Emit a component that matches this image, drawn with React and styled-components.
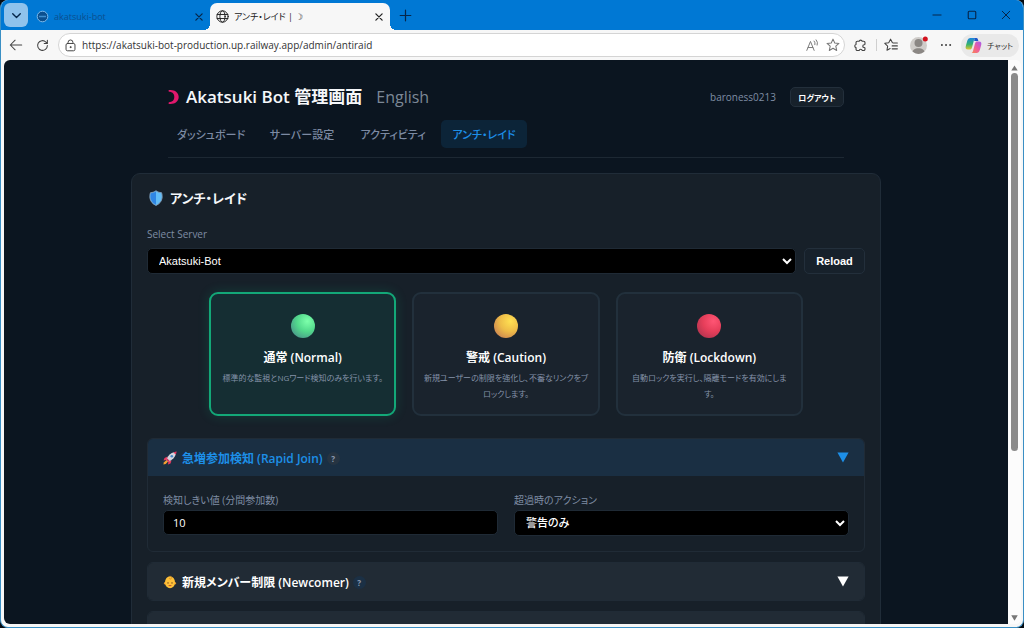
import React, { useState } from "react";
import styled, { createGlobalStyle, css } from "styled-components";

const Global = createGlobalStyle`
  *, *::before, *::after { box-sizing: border-box; }
  html, body { margin: 0; background: #050a10; }
  body, button, input, select {
    font-family: "Open Sans", "Noto Sans CJK JP", sans-serif;
    font-feature-settings: "palt";
  }
  button { padding: 0; border: 0; background: none; color: inherit; cursor: pointer; }
`;

/* ---------- browser window ---------- */

const Window = styled.div`
  height: 100vh;
  display: flex;
  flex-direction: column;
  overflow: hidden;
  background: #f7f7f7;
  border: solid #3a8fc4;
  border-width: 0 1px 1px;
  border-radius: 8px;
`;

const TitleBar = styled.div`
  display: flex;
  align-items: flex-end;
  height: 30px;
  flex: none;
  padding-left: 3px;
  background: #0078d4;
  color: #06264a;
`;

const TabMenuButton = styled.button`
  display: grid;
  place-items: center;
  width: 24px;
  height: 24px;
  margin: 0 6px 3px 0;
  border-radius: 6px;
  background: #8fc2ec;
`;

const Tab = styled.div`
  position: relative;
  display: flex;
  align-items: center;
  gap: 5px;
  height: 27px;
  width: 176px;
  padding: 0 5px 0 2px;
  font-size: 9px;
  color: #0b4f8f;
  ${(p) =>
    p.$active &&
    css`
      width: 180px;
      padding-left: 6px;
      background: #f7f7f7;
      color: #222;
      border-radius: 7px 7px 0 0;
      &::before, &::after {
        content: "";
        position: absolute;
        bottom: 0;
        width: 6px;
        height: 6px;
      }
      &::before { left: -6px; background: radial-gradient(circle at 0 0, transparent 6px, #f7f7f7 6px); }
      &::after { right: -6px; background: radial-gradient(circle at 100% 0, transparent 6px, #f7f7f7 6px); }
    `}
`;

const TabLabel = styled.span`
  flex: 1;
  white-space: nowrap;
`;

const IconButton = styled.button`
  display: grid;
  place-items: center;
  flex: none;
  width: ${(p) => p.$w || 27}px;
  height: ${(p) => p.$h || 24}px;
  color: ${(p) => p.$color || "inherit"};
`;

const WindowControls = styled.div`
  display: flex;
  margin-left: auto;
`;

const Toolbar = styled.div`
  display: flex;
  align-items: center;
  height: 30px;
  flex: none;
  padding: 0 4px 0 1px;
  color: #444;
`;

const AddressBar = styled.label`
  display: flex;
  align-items: center;
  flex: 1;
  height: 24px;
  margin-left: 2px;
  padding-left: 5px;
  border: 1px solid #d4d4d4;
  border-radius: 12px;
  background: #fff;
`;

const AddressInput = styled.input`
  flex: 1;
  min-width: 0;
  padding: 0 0 0 5px;
  border: 0;
  outline: 0;
  background: none;
  font-size: 10px;
  color: #333;
`;

const Separator = styled.span`
  width: 1px;
  height: 12px;
  background: #cfcfcf;
`;

const ChatButton = styled.button`
  display: flex;
  align-items: center;
  gap: 5px;
  width: 58px;
  height: 23px;
  margin-left: 2px;
  padding-left: 4px;
  border-radius: 12px;
  background: #e9e9e9;
  font-size: 8px;
  white-space: nowrap;
  color: #333;
`;

const Viewport = styled.div`
  flex: 1;
  min-height: 0;
  display: flex;
  margin: 0 2px 3px 3px;
  border-radius: 6px;
  overflow: hidden;
  background: #fcfcfc;
`;

const Page = styled.main`
  flex: 1;
  min-width: 0;
  overflow: hidden;
  background: #0b1520;
  color: #f5f7fa;
`;

const ScrollTrack = styled.div`
  display: flex;
  flex-direction: column;
  align-items: center;
  width: 13px;
  padding: 5px 0 3px;
  background: #fcfcfc;
`;

const ScrollThumb = styled.div`
  width: 7px;
  height: 68%;
  margin: 2px 0 auto;
  border-radius: 4px;
  background: #8a8a8a;
`;

/* ---------- admin page ---------- */

const Header = styled.header`
  max-width: 676px;
  margin: 0 auto;
  padding: 24px 0 9px;
  border-bottom: 1px solid #1d2833;
`;

const HeaderRow = styled.div`
  display: flex;
  align-items: center;
  height: 26px;
`;

const Brand = styled.h1`
  display: flex;
  align-items: center;
  gap: 7px;
  margin: 0;
  font-size: 17px;
  line-height: 26px;
  font-weight: 600;
  white-space: nowrap;
`;

const LanguageLink = styled.a`
  margin-left: 14px;
  font-size: 16px;
  line-height: 26px;
  color: #7c8896;
  text-decoration: none;
`;

const UserName = styled.span`
  margin-left: auto;
  font-size: 10px;
  color: #7f8da4;
`;

const PanelButton = styled.button`
  height: ${(p) => p.$h}px;
  width: ${(p) => p.$w}px;
  flex: none;
  border: 1px solid #232f3b;
  border-radius: 5px;
  background: #17212b;
  color: #fff;
  font-weight: 700;
  white-space: nowrap;
  font-size: ${(p) => p.$size}px;
`;

const Logout = styled(PanelButton)`
  margin-left: 14px;
`;

const Reload = styled(PanelButton)`
  font-family: "Liberation Sans", sans-serif;
`;

const Nav = styled.nav`
  display: flex;
  gap: 5px;
  margin-top: 10px;
`;

const NavLink = styled.a`
  min-width: 86px;
  height: 28px;
  border-radius: 5px;
  font-size: 11px;
  line-height: 29px;
  font-weight: 500;
  text-align: center;
  white-space: nowrap;
  text-decoration: none;
  color: ${(p) => (p.$active ? "#1d8fe8" : "#7c8aa3")};
  background: ${(p) => (p.$active ? "#0c2438" : "transparent")};
`;

const Card = styled.section`
  max-width: 750px;
  margin: 15px auto 0;
  padding: 12px 15px;
  border: 1px solid #202c38;
  border-radius: 9px;
  background: #172029;
`;

const CardTitle = styled.h2`
  display: flex;
  align-items: center;
  gap: 7px;
  margin: 0;
  padding-left: 2px;
  font-size: 13px;
  line-height: 24px;
  font-weight: 700;
`;

const FieldLabel = styled.label`
  display: block;
  font-size: 10px;
  line-height: 20px;
  color: #7f8da4;
  white-space: nowrap;
`;

const ServerField = styled.div`
  padding-top: 14px;
`;

const ServerRow = styled.div`
  display: flex;
  align-items: center;
  gap: 8px;
  margin-top: 4px;
`;

const control = css`
  width: 100%;
  border: 1px solid #1f2a35;
  border-radius: 5px;
  background: #000;
  color: #fff;
  font-weight: 500;
`;

const Select = styled.select`
  ${control}
  height: 26px;
  padding: 0 0 0 7px;
  font-family: "Liberation Sans", "Noto Sans CJK JP", sans-serif;
  font-size: 11px;
`;

const NumberInput = styled.input`
  ${control}
  height: 25px;
  padding: 0 9px;
  font-size: 11px;
`;

const Modes = styled.div`
  display: grid;
  grid-template-columns: repeat(3, 1fr);
  gap: 16px;
  max-width: 594px;
  margin: 18px auto 22px;
`;

const Mode = styled.button`
  display: flex;
  flex-direction: column;
  align-items: center;
  min-height: 124px;
  padding: 20px 8px 12px;
  border: 2px solid ${(p) => (p.$active ? "#13a878" : "#22303c")};
  border-radius: 9px;
  background: ${(p) => (p.$active ? "#152e33" : "#1a232d")};
  box-shadow: ${(p) => (p.$active ? "0 0 12px #10b98133" : "none")};
`;

const ModeName = styled.span`
  margin-top: 10px;
  font-size: 12px;
  line-height: 20px;
  font-weight: 600;
  color: #fff;
`;

const ModeText = styled.span`
  margin-top: 2px;
  font-size: 8px;
  line-height: 16px;
  color: #8492a8;
  white-space: pre-line;
`;

const Accordion = styled.section`
  margin-bottom: 10px;
  border: 1px solid #202b36;
  border-radius: 6px;
  overflow: hidden;
`;

const AccordionHead = styled.button`
  display: flex;
  align-items: center;
  width: 100%;
  height: 37px;
  padding: 0 15px;
  font-size: 12px;
  font-weight: 600;
  color: ${(p) => (p.$open ? "#1d8fe8" : "#fff")};
  background: ${(p) => (p.$open ? "#1a2f43" : "#212b35")};
`;

const AccordionName = styled.span`
  margin-left: 5px;
`;

const Help = styled.span`
  display: grid;
  place-items: center;
  width: 13px;
  height: 13px;
  margin: 2px 0 0 4px;
  border-radius: 50%;
  background: ${(p) => (p.$open ? "#263442" : "#1b3045")};
  font-size: 8px;
  font-weight: 700;
  color: #8e9db2;
`;

const Chevron = styled.span`
  display: flex;
  margin-left: auto;
`;

const AccordionBody = styled.div`
  display: grid;
  grid-template-columns: 1fr 1fr;
  gap: 16px;
  padding: 14px 15px 15px;
`;

const Field = styled.div`
  min-width: 0;
`;

/* ---------- drawings ---------- */

const Svg = ({ w = 14, h = w, box = "0 0 16 16", sw = 1.2, children }) => (
  <svg width={w} height={h} viewBox={box} fill="none" stroke="currentColor" strokeWidth={sw} strokeLinecap="round" strokeLinejoin="round" aria-hidden="true">
    {children}
  </svg>
);

const CloseIcon = ({ w = 10 }) => <Svg w={w} sw={2}><path d="M3 3l10 10M13 3L3 13" /></Svg>;

const Moon = () => (
  <svg width="11" height="16" viewBox="0 0 11 16" aria-hidden="true">
    <path d="M.5 1.2C6 .2 10.700 3.200 10.700 8S6 15.800.5 14.800L.8 13.200C4.500 13.200 6.300 11 6.300 8S4.500 2.800.8 2.800Z" fill="#e0186c" />
  </svg>
);

const Shield = () => (
  <svg width="14" height="16" viewBox="0 0 14 16" aria-hidden="true">
    <path d="M7 .8C5.200 2.100 3.400 2.600 1.500 2.700C.8 4.500.8 6.500 1 8.200c.4 3.300 2.800 5.900 6 7.200 3.200-1.300 5.600-3.900 6-7.200.2-1.700.2-3.700-.5-5.500C10.600 2.600 8.800 2.100 7 .8Z" fill="#62bdf7" stroke="#7f9cb8" strokeWidth="1" />
    <path d="M7 1.600C5.400 2.700 3.800 3.100 2 3.200C1.400 5 1.400 6.500 1.600 8.100 2 11 4.200 13.400 7 14.700Z" fill="#2f86e4" />
  </svg>
);

const Ball = ({ id, light, mid, dark }) => (
  <svg width="24" height="24" viewBox="0 0 24 24" aria-hidden="true">
    <defs>
      <radialGradient id={id} cx=".68" cy=".3" r=".78">
        <stop offset="0" stopColor={light} />
        <stop offset=".55" stopColor={mid} />
        <stop offset="1" stopColor={dark} />
      </radialGradient>
    </defs>
    <circle cx="12" cy="12" r="12" fill={`url(#${id})`} />
  </svg>
);

const Rocket = () => (
  <svg width="14" height="14" viewBox="0 0 14 14" aria-hidden="true">
    <path d="M4.500 5.500L1.500 7 .5 9.500 4 8.800ZM8.500 9.500L7.500 12.500 5 13.500 5.500 10Z" fill="#e8375f" />
    <path d="M3.500 9L.8 11.500.4 13.600 2.700 13.100 5 10.600Z" fill="#f5a030" />
    <path d="M3.200 8.700C5 4.500 8 1.800 11 1.300L12.800 3.100C12.200 6.200 9.400 9.200 5.300 10.900Z" fill="#d6d3dd" />
    <path d="M10.500 1.400C12 .7 13.300.5 13.600.5 13.600 1 13.400 2.200 12.700 3.600Z" fill="#e8375f" />
    <circle cx="8.800" cy="5.200" r="1.300" fill="#4687c7" />
    <path d="M3.200 8.700L5.300 10.900 6.800 10 4 7.200Z" fill="#d4315d" />
  </svg>
);

const Baby = () => (
  <svg width="14" height="14" viewBox="0 0 14 14" aria-hidden="true">
    <circle cx="2.300" cy="8.200" r="1.300" fill="#e89a2b" />
    <circle cx="11.700" cy="8.200" r="1.300" fill="#e89a2b" />
    <ellipse cx="7" cy="7.200" rx="5" ry="6" fill="#fdbf38" />
    <path d="M6.600 1.300C9 1 9.200 3.400 7.500 4 6.400 4.200 6.100 3.300 6.800 2.900" fill="none" stroke="#c98424" strokeWidth=".7" />
    <circle cx="5" cy="7.900" r=".7" fill="#5a3420" />
    <circle cx="9" cy="7.900" r=".7" fill="#5a3420" />
    <path d="M5.200 10.200C6.200 11.500 7.800 11.500 8.800 10.200Z" fill="#b23a2c" />
  </svg>
);

const Triangle = ({ w = 12, h = 11, fill = "currentColor", up }) => (
  <svg width={w} height={h} viewBox="0 0 12 11" preserveAspectRatio="none" aria-hidden="true">
    <path d={up ? "M6 1L11.500 10H.5Z" : "M.4.6H11.600L6 10.400Z"} fill={fill} />
  </svg>
);

const Copilot = () => (
  <svg width="17" height="17" viewBox="0 0 17 17" aria-hidden="true">
    <defs>
      <linearGradient id="cpA" x1="0" y1="0" x2="0" y2="1">
        <stop offset="0" stopColor="#1b83e0" /><stop offset=".55" stopColor="#35b36b" /><stop offset="1" stopColor="#e6c52f" />
      </linearGradient>
      <linearGradient id="cpB" x1="1" y1="0" x2="0" y2="1">
        <stop offset="0" stopColor="#a35cf0" /><stop offset=".5" stopColor="#ee5c9d" /><stop offset="1" stopColor="#f98a4c" />
      </linearGradient>
    </defs>
    <path d="M5.500 1H11C10 1 9.400 1.600 9 3L7 10.500C6.600 12 6 12.600 4.700 12.600H3C.7 12.600.3 11 .8 9L2.200 4C2.800 2 3.800 1 5.500 1Z" fill="url(#cpA)" />
    <path d="M9.500 1H11.500C12.800 1 13 2.500 13.400 4H9.200Z" fill="#1c56c8" />
    <path d="M11.500 16H6C7 16 7.600 15.400 8 14L10 6.500C10.400 5 11 4.400 12.300 4.400H14C16.300 4.400 16.700 6 16.200 8L14.800 13C14.200 15 13.200 16 11.500 16Z" fill="url(#cpB)" />
  </svg>
);

const Avatar = () => (
  <svg width="22" height="20" viewBox="0 0 22 20" aria-hidden="true">
    <clipPath id="av"><circle cx="10.500" cy="10.500" r="8.500" /></clipPath>
    <g clipPath="url(#av)">
      <rect width="22" height="20" fill="#cfccc9" />
      <circle cx="10.500" cy="8" r="4" fill="#8b8784" />
      <path d="M4 20C4 15 6.500 13.300 10.500 13.300S17 15 17 20Z" fill="#8b8784" />
    </g>
    <circle cx="17.300" cy="4" r="2.500" fill="#d3131f" />
  </svg>
);

function BrowserBars() {
  return (
    <>
      <TitleBar>
        <TabMenuButton aria-label="タブ メニュー"><Svg w={11} sw={2}><path d="M2.500 5.500L8 11l5.500-5.500" /></Svg></TabMenuButton>
        <Tab>
          <svg width="13" height="13" viewBox="0 0 13 13" aria-hidden="true">
            <circle cx="6.500" cy="6.500" r="5.300" fill="#0b4f8f" stroke="#7fb9e8" strokeWidth="1" />
            <path d="M3 6.500h7" stroke="#3f8fd0" strokeWidth="1.500" />
          </svg>
          <TabLabel>akatsuki-bot</TabLabel>
          <IconButton $w={13} $color="#06264a" aria-label="閉じる"><CloseIcon /></IconButton>
        </Tab>
        <Tab $active>
          <Svg w={13}>
            <circle cx="8" cy="8" r="7" />
            <ellipse cx="8" cy="8" rx="3.200" ry="7" />
            <path d="M1.500 5.500h13M1.500 10.500h13" />
          </Svg>
          <TabLabel>アンチ・レイド | ☽</TabLabel>
          <IconButton $w={13} aria-label="閉じる"><CloseIcon /></IconButton>
        </Tab>
        <IconButton $w={30} $h={30} aria-label="新しいタブ"><Svg w={13} sw={1.5}><path d="M8 1.500v13M1.500 8h13" /></Svg></IconButton>
        <WindowControls>
          <IconButton $w={34} $h={30} aria-label="最小化"><Svg w={10} sw={1.6}><path d="M1.500 8h13" /></Svg></IconButton>
          <IconButton $w={35} $h={30} aria-label="最大化"><Svg w={10} sw={1.8}><rect x="2" y="2" width="12" height="12" rx="1.500" /></Svg></IconButton>
          <IconButton $w={34} $h={30} aria-label="閉じる"><Svg w={10} sw={1.6}><path d="M2 2l12 12M14 2L2 14" /></Svg></IconButton>
        </WindowControls>
      </TitleBar>
      <Toolbar>
        <IconButton aria-label="戻る"><Svg w={14}><path d="M14.500 8h-13M7 2.500L1.500 8 7 13.500" /></Svg></IconButton>
        <IconButton aria-label="更新"><Svg w={13} sw={1.3}><path d="M14 8A6 6 0 1 1 12.200 3.700L14 5.500M14 1.600v3.900h-3.900" /></Svg></IconButton>
        <AddressBar>
          <Svg w={13}><rect x="2.500" y="5.500" width="11" height="9" rx="1.800" /><path d="M5 5.500V4.200a3 3 0 0 1 6 0v1.300" /><circle cx="8" cy="10" r=".6" fill="currentColor" /></Svg>
          <AddressInput aria-label="アドレス" defaultValue="https://akatsuki-bot-production.up.railway.app/admin/antiraid" />
          <IconButton $w={20} $color="#777" aria-label="音声で読み上げる">
            <Svg w={13}><path d="M1 14L5.500 3 10 14M2.600 10.500h5.800M10 2.500q1.800 2 1 4.500M12.500 1q2.600 3 1.300 6.500" /></Svg>
          </IconButton>
          <IconButton $w={22} $color="#777" aria-label="お気に入りに追加">
            <Svg w={14}><path d="M8 1.300l2 4.400 4.800.5-3.600 3.200 1 4.800L8 11.800l-4.200 2.400 1-4.800L1.200 6.200 6 5.700Z" /></Svg>
          </IconButton>
        </AddressBar>
        <IconButton $w={31} aria-label="拡張機能">
          <Svg w={13} sw={1.4}><path d="M4 2.800H6.300a2 2 0 0 1 3.800 0H12a1.500 1.500 0 0 1 1.500 1.500V6.300a1 1 0 0 1-1 .8 1.700 1.700 0 0 0 0 3.400 1 1 0 0 1 1 .8V12.700A1.500 1.500 0 0 1 12 14.200H10.200a2 2 0 0 0-3.900 0H4A1.500 1.500 0 0 1 2.500 12.700V10.600a2 2 0 0 1 0-3.900V4.300A1.500 1.500 0 0 1 4 2.800Z" /></Svg>
        </IconButton>
        <Separator />
        <IconButton $w={28} aria-label="お気に入り"><Svg w={14}><path d="M9.500 5.200L7.500 1.300 5.400 5.500.9 6.100l3.300 3.200-.8 4.600L7 12M10.300 5.600h5M9.300 9h6M9.300 12.400h6" /></Svg></IconButton>
        <IconButton aria-label="プロファイル"><Avatar /></IconButton>
        <IconButton aria-label="設定など"><Svg w={12} sw={2.6}><path d="M2.500 8h.1M8 8h.1M13.500 8h.1" /></Svg></IconButton>
        <ChatButton><Copilot />チャット</ChatButton>
      </Toolbar>
    </>
  );
}

const NAV = ["ダッシュボード", "サーバー設定", "アクティビティ", "アンチ・レイド"];

const MODES = [
  { id: "normal", name: "通常 (Normal)", text: "標準的な監視とNGワード検知のみを行います。", ball: ["#7dffab", "#52d98c", "#4a9d8a"] },
  { id: "caution", name: "警戒 (Caution)", text: "新規ユーザーの制限を強化し、不審なリンクをブ\nロックします。", ball: ["#ffe052", "#eebc48", "#cf8a50"] },
  { id: "lockdown", name: "防衛 (Lockdown)", text: "自動ロックを実行し、隔離モードを有効にしま\nす。", ball: ["#ff5574", "#e63e5a", "#b83550"] },
];

function Section({ icon, name, open, onToggle, children }) {
  return (
    <Accordion>
      <AccordionHead $open={open} aria-expanded={open} onClick={onToggle}>
        {icon}
        {name && <AccordionName>{name}</AccordionName>}
        {name && <Help $open={open}>?</Help>}
        <Chevron><Triangle /></Chevron>
      </AccordionHead>
      {open && children}
    </Accordion>
  );
}

export default function App() {
  const [mode, setMode] = useState("normal");
  const [open, setOpen] = useState("join");
  const toggle = (id) => () => setOpen(open === id ? "" : id);
  return (
    <>
      <Global />
      <Window>
        <BrowserBars />
        <Viewport>
          <Page>
            <Header>
              <HeaderRow>
                <Brand><Moon />Akatsuki Bot 管理画面</Brand>
                <LanguageLink href="#en">English</LanguageLink>
                <UserName>baroness0213</UserName>
                <Logout $w={54} $h={20} $size={8}>ログアウト</Logout>
              </HeaderRow>
              <Nav>
                {NAV.map((n, i) => (
                  <NavLink key={n} href="#nav" $active={i === 3}>{n}</NavLink>
                ))}
              </Nav>
            </Header>
            <Card>
              <CardTitle><Shield />アンチ・レイド</CardTitle>
              <ServerField>
                <FieldLabel htmlFor="server">Select Server</FieldLabel>
                <ServerRow>
                  <Select id="server"><option>Akatsuki-Bot</option></Select>
                  <Reload $w={61} $h={26} $size={11}>Reload</Reload>
                </ServerRow>
              </ServerField>
              <Modes>
                {MODES.map((m) => (
                  <Mode key={m.id} $active={mode === m.id} onClick={() => setMode(m.id)}>
                    <Ball id={m.id} light={m.ball[0]} mid={m.ball[1]} dark={m.ball[2]} />
                    <ModeName>{m.name}</ModeName>
                    <ModeText>{m.text}</ModeText>
                  </Mode>
                ))}
              </Modes>
              <Section icon={<Rocket />} name="急増参加検知 (Rapid Join)" open={open === "join"} onToggle={toggle("join")}>
                <AccordionBody>
                  <Field>
                    <FieldLabel htmlFor="threshold">検知しきい値 (分間参加数)</FieldLabel>
                    <NumberInput id="threshold" inputMode="numeric" defaultValue="10" />
                  </Field>
                  <Field>
                    <FieldLabel htmlFor="action">超過時のアクション</FieldLabel>
                    <Select id="action"><option>警告のみ</option></Select>
                  </Field>
                </AccordionBody>
              </Section>
              <Section icon={<Baby />} name="新規メンバー制限 (Newcomer)" open={open === "new"} onToggle={toggle("new")} />
              <Section open={false} />
            </Card>
          </Page>
          <ScrollTrack>
            <Triangle w={7} h={6} fill="#777" up />
            <ScrollThumb />
            <Triangle w={7} h={6} fill="#777" />
          </ScrollTrack>
        </Viewport>
      </Window>
    </>
  );
}
